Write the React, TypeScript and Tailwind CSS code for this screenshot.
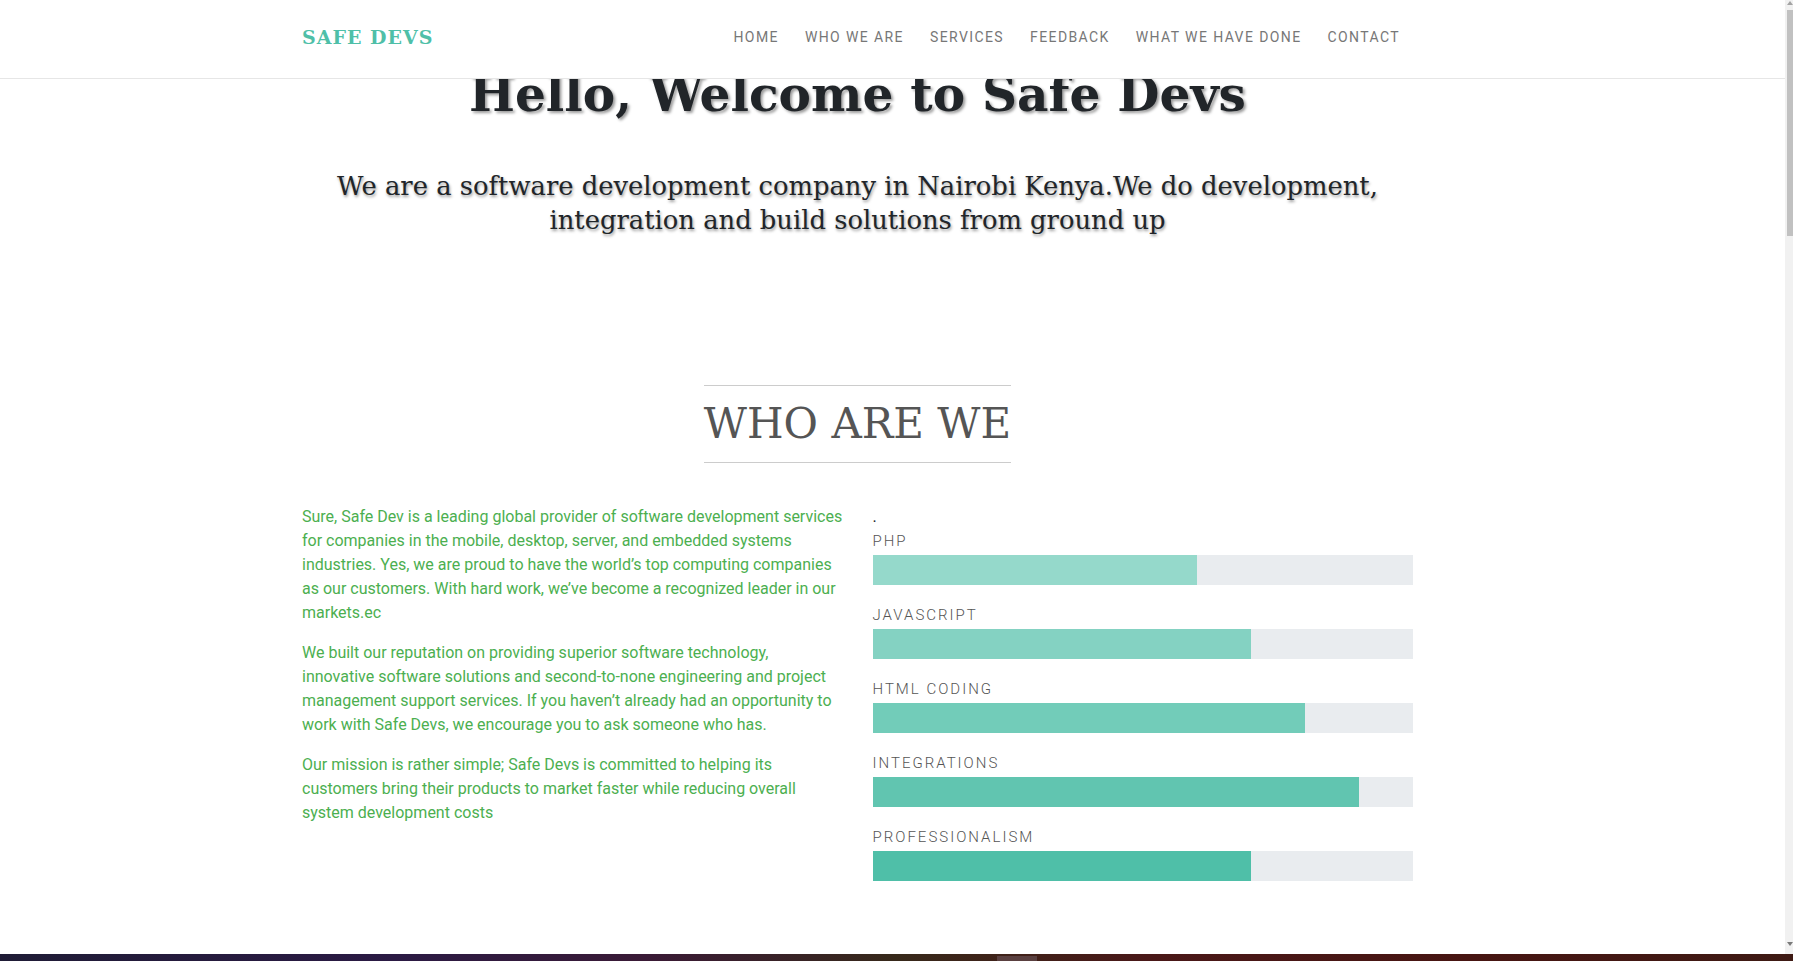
import React from "react";

const navItems = ["Home", "Who we are", "Services", "Feedback", "What we have done", "Contact"];

const skills = [
  { name: "PHP", pct: 60, color: "bg-[#95d9cb]" },
  { name: "JavaScript", pct: 70, color: "bg-[#84d2c2]" },
  { name: "HTML coding", pct: 80, color: "bg-[#72ccb9]" },
  { name: "Integrations", pct: 90, color: "bg-[#61c5b0]" },
  { name: "Professionalism", pct: 70, color: "bg-[#4fbfa8]" },
];

const slab = "font-['Roboto_Slab','DejaVu_Serif',serif]";

export default function App() {
  return (
    <div className="flex h-[961px] w-[1793px] flex-col overflow-hidden bg-white font-['Roboto',sans-serif]">
      <div className="flex h-[954px] shrink-0">
        <div className="relative flex min-w-0 flex-1 flex-col overflow-hidden">
          <nav className="absolute left-0 right-0 top-0 z-10 flex h-[79px] items-center border-b border-[#e6e6e6] bg-white pb-[4px]">
            <div className="ml-[302px] flex w-[1111px] items-center justify-between">
              <span className={`${slab} text-[19px] font-bold tracking-[1px] text-[#4fbfa8]`}>SAFE DEVS</span>
              <ul className="flex">
                {navItems.map((n) => (
                  <li key={n} className="px-[13px] text-[14px] uppercase tracking-[1.4px] text-[#777]">
                    {n}
                  </li>
                ))}
              </ul>
            </div>
          </nav>

          <div className="ml-[302px] flex w-[1111px] flex-col">
            <section className="flex flex-col items-center pt-[65px]">
              <h1 className={`${slab} text-[48.6px] font-bold leading-[57px] text-[#212529] [text-shadow:2px_2px_3px_#9a9a9a]`}>
                Hello, Welcome to Safe Devs
              </h1>
              <p className={`${slab} mt-[47px] whitespace-nowrap text-center text-[25.8px] leading-[34px] text-[#212529] [text-shadow:1px_2px_3px_#9a9a9a]`}>
                We are a software development company in Nairobi Kenya.We do development,
                <br />
                integration and build solutions from ground up
              </p>
            </section>

            <section className="mt-[148px] flex flex-col items-center">
              <h2 className={`${slab} border-y border-[#cccccc] py-[10px] text-[42px] font-light leading-[56px] text-[#555]`}>
                WHO ARE WE
              </h2>
              <div className="mt-[42px] grid w-full grid-cols-2 gap-x-[30px]">
                <div className="text-[16px] leading-[24px] text-[#4caf50]">
                  <p className="mb-4">
                    Sure, Safe Dev is a leading global provider of software development services for companies in the mobile, desktop, server, and embedded systems industries. Yes, we are proud to have the world’s top computing companies as our customers. With hard work, we’ve become a recognized leader in our markets.ec
                  </p>
                  <p className="mb-4">
                    We built our reputation on providing superior software technology, innovative software solutions and second-to-none engineering and project management support services. If you haven’t already had an opportunity to work with Safe Devs, we encourage you to ask someone who has.
                  </p>
                  <p className="mb-4">
                    Our mission is rather simple; Safe Devs is committed to helping its customers bring their products to market faster while reducing overall system development costs
                  </p>
                </div>
                <div>
                  <div className="text-[16px] leading-[24px] text-[#212529]">.</div>
                  {skills.map((s) => (
                    <div key={s.name} className="mb-[18px]">
                      <div className="mb-[2px] text-[15px] font-light uppercase leading-[24px] tracking-[2px] text-[#555]">{s.name}</div>
                      <div className="flex h-[30px] bg-[#e9ecef]">
                        <div className={`h-full ${s.color}`} style={{ width: `${s.pct}%` }} />
                      </div>
                    </div>
                  ))}
                </div>
              </div>
            </section>
          </div>
        </div>

        <div className="flex w-[8px] shrink-0 flex-col bg-[#f1f1f1] pl-[2px]">
          <div className="flex h-[10px] items-start justify-center pt-[1px]">
            <svg width="6" height="4" viewBox="0 0 6 4"><path d="M3 0 L6 4 L0 4 Z" fill="#a3a3a3" /></svg>
          </div>
          <div className="h-[226px] bg-[#c1c1c1]" />
          <div className="flex-1" />
          <div className="flex h-[12px] items-start justify-center">
            <svg width="6" height="4" viewBox="0 0 6 4"><path d="M0 0 L6 0 L3 4 Z" fill="#7a7a7a" /></svg>
          </div>
        </div>
      </div>

      <div className="flex flex-1 justify-center bg-[linear-gradient(90deg,#1f1c36_0%,#2b1a44_22%,#3a1a36_36%,#37291a_50%,#4a1818_64%,#471512_82%,#3e1a14_100%)]">
        <div className="ml-[240px] mt-[2px] h-[5px] w-[40px] bg-[#5a4040]" />
      </div>
    </div>
  );
}
